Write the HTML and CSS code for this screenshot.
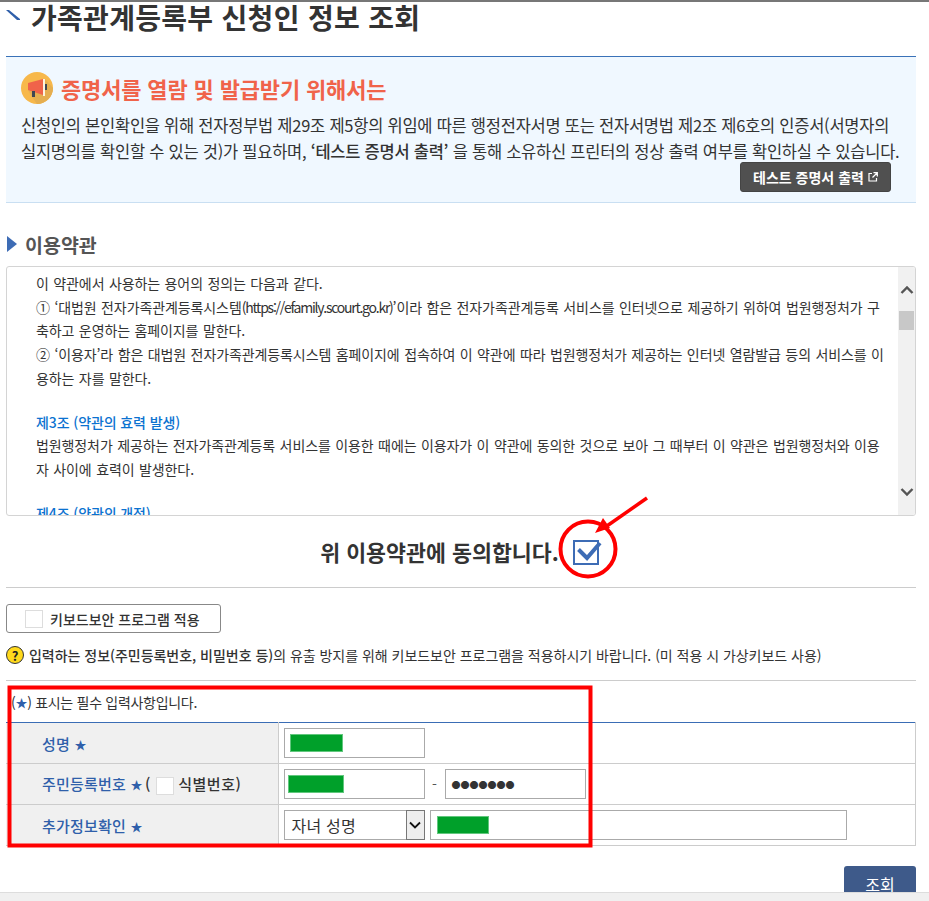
FILE: index.html
```html
<!DOCTYPE html>
<html lang="ko">
<head>
<meta charset="utf-8">
<title>가족관계등록부 신청인 정보 조회</title>
<link rel="stylesheet" href="styles.css">
</head>
<body>
<div class="page">
  <h1 class="title"><svg class="title-mark" viewBox="0 0 14 10"><path d="M0 0 L3 0 L14 9 L14 10 L11 10 Z" fill="#2f5faa"/></svg>가족관계등록부 신청인 정보 조회</h1>

  <section class="notice">
    <div class="notice-head">
      <svg class="notice-icon" viewBox="0 0 32 32">
        <circle cx="16" cy="16" r="16" fill="#f7b84b"/>
        <path d="M11 25 L7 18 L24 7 L32 16 A16 16 0 0 1 16 32 Z" fill="#e5ae50"/>
        <path d="M7 11 L22 7 V23 L7 18 Z" fill="#f0634a"/>
        <rect x="22" y="7" width="2" height="17" fill="#fdf3dd"/>
        <rect x="24" y="12" width="2" height="6" fill="#3f4654"/>
        <rect x="11" y="19" width="3" height="6" fill="#3f4654"/>
      </svg>
      <h2 class="notice-title">증명서를 열람 및 발급받기 위해서는</h2>
    </div>
    <p class="notice-text">신청인의 본인확인을 위해 전자정부법 제29조 제5항의 위임에 따른 행정전자서명 또는 전자서명법 제2조 제6호의 인증서(서명자의<br>실지명의를 확인할 수 있는 것)가 필요하며, <strong>‘테스트 증명서 출력’</strong> 을 통해 소유하신 프린터의 정상 출력 여부를 확인하실 수 있습니다.</p>
    <div class="notice-actions">
      <a class="dark-btn">테스트 증명서 출력
        <svg class="ext-icon" viewBox="0 0 10 10"><path d="M4 1.5 H1 V9 H8.5 V6" fill="none" stroke="#fff" stroke-width="1.2"/><path d="M5.5 0.7 H9.3 V4.5 M9 1 L4.5 5.5" fill="none" stroke="#fff" stroke-width="1.3"/></svg>
      </a>
    </div>
  </section>

  <h3 class="section-title"><span class="tri"></span>이용약관</h3>

  <div class="terms">
    <div class="terms-body">
      <p>이 약관에서 사용하는 용어의 정의는 다음과 같다.</p>
      <p>① ‘대법원 전자가족관계등록시스템<span class="url">(https://efamily.scourt.go.kr)</span>’이라 함은 전자가족관계등록 서비스를 인터넷으로 제공하기 위하여 법원행정처가 구축하고 운영하는 홈페이지를 말한다.</p>
      <p>② ‘이용자’라 함은 대법원 전자가족관계등록시스템 홈페이지에 접속하여 이 약관에 따라 법원행정처가 제공하는 인터넷 열람발급 등의 서비스를 이용하는 자를 말한다.</p>
      <h4 class="terms-head">제3조 (약관의 효력 발생)</h4>
      <p>법원행정처가 제공하는 전자가족관계등록 서비스를 이용한 때에는 이용자가 이 약관에 동의한 것으로 보아 그 때부터 이 약관은 법원행정처와 이용자 사이에 효력이 발생한다.</p>
      <h4 class="terms-head">제4조 (약관의 개정)</h4>
    </div>
    <div class="scrollbar">
      <svg class="sb-arrow" viewBox="0 0 14 10"><path d="M1.5 8 L7 2.5 L12.5 8" fill="none" stroke="#555" stroke-width="2.4"/></svg>
      <div class="sb-thumb"></div>
      <svg class="sb-arrow sb-down" viewBox="0 0 14 10"><path d="M1.5 2 L7 7.5 L12.5 2" fill="none" stroke="#555" stroke-width="2.4"/></svg>
    </div>
  </div>

  <div class="agree">
    <span class="agree-text">위 이용약관에 동의합니다.</span>
    <svg class="agree-check" viewBox="0 0 30 26">
      <rect x="2" y="2" width="24" height="23" fill="#fff" stroke="#3d6cb5" stroke-width="2"/>
      <path d="M6.5 10.5 L15 19 L28 4" fill="none" stroke="#3d6cb5" stroke-width="4"/>
    </svg>
  </div>

  <div class="security">
    <label class="outline-btn"><span class="box"></span>키보드보안 프로그램 적용</label>
    <p class="help"><span class="q-icon">?</span><span><strong>입력하는 정보(주민등록번호, 비밀번호 등)</strong>의 유출 방지를 위해 키보드보안 프로그램을 적용하시기 바랍니다. (미 적용 시 가상키보드 사용)</span></p>
  </div>

  <p class="required-note">(<b class="star">★</b>) 표시는 필수 입력사항입니다.</p>

  <table class="form">
    <tr>
      <th><span class="label">성명 <b class="star">★</b></span></th>
      <td><span class="field"><i class="mask mask-a"></i></span></td>
    </tr>
    <tr>
      <th><span class="label">주민등록번호 <b class="star">★</b></span> <span class="id-opt">( <span class="box"></span> 식별번호)</span></th>
      <td><div class="cell-row"><span class="field"><i class="mask mask-b"></i></span><span class="dash">-</span><span class="field dots">●●●●●●●</span></div></td>
    </tr>
    <tr>
      <th><span class="label">추가정보확인 <b class="star">★</b></span></th>
      <td><div class="cell-row tight"><span class="field select">자녀 성명<span class="sel-btn"><svg viewBox="0 0 12 8"><path d="M1 1.5 L6 6.5 L11 1.5" fill="none" stroke="#111" stroke-width="1.8"/></svg></span></span><span class="field wide"><i class="mask mask-c"></i></span></div></td>
    </tr>
  </table>

  <div class="actions"><a class="search-btn">조회</a></div>
</div>

<svg class="annot" viewBox="0 0 929 901" width="929" height="901">
  <rect x="9.5" y="687.5" width="581" height="158" fill="none" stroke="#ff0000" stroke-width="4"/>
  <ellipse cx="588" cy="549" rx="27.5" ry="27.5" fill="none" stroke="#ff0000" stroke-width="4"/>
  <path d="M647 498 L604 528" stroke="#ff0000" stroke-width="3.5" fill="none"/>
  <path d="M595 533 L603 518 L610 528 Z" fill="#ff0000"/>
</svg>
<div class="hscroll"></div>
</body>
</html>
```
FILE: styles.css
```css
* { box-sizing: border-box; }
html, body { margin: 0; padding: 0; height: 901px; overflow: hidden; background: #fff; }
body {
  font-family: "Noto Sans CJK KR", "Noto Sans", sans-serif;
  color: #333;
  font-size: 14px;
}
.page {
  width: 929px;
  height: 901px;
  padding: 0 13px 0 6px;
  border-top: 2px solid #777;
  overflow: hidden;
}
.title {
  display: flex;
  align-items: center;
  height: 30px;
  margin: 0;
  font-size: 28px;
  line-height: 30px;
  font-weight: 700;
  color: #333;
  letter-spacing: 0.3px;
}
.title-mark { width: 14px; height: 10px; margin: -4px 11px 0 0; }
.notice {
  margin-top: 24px;
  height: 147px;
  background: #f0f8ff;
  border-top: 1px solid #3a72b8;
  border-bottom: 1px solid #c9dff2;
  padding: 15px 15px 0 15px;
}
.notice-head { display: flex; align-items: center; gap: 8px; height: 32px; }
.notice-icon { width: 32px; height: 32px; flex: none; }
.notice-title { margin: 0; font-size: 22px; font-weight: 700; color: #f0634a; letter-spacing: -0.15px; }
.notice-text {
  margin: 8px 0 0;
  font-size: 16.5px;
  line-height: 26px;
  color: #333;
  letter-spacing: -0.25px;
  white-space: nowrap;
}
.notice-text strong { font-weight: 500; }
.notice-actions { display: flex; justify-content: flex-end; margin: -2px 10px 0 0; }
.dark-btn {
  display: flex;
  align-items: center;
  justify-content: center;
  gap: 4px;
  width: 151px;
  height: 30px;
  background: #505050;
  border: 1px solid #444;
  border-radius: 3px;
  color: #fff;
  font-size: 14px;
  font-weight: 700;
}
.ext-icon { width: 10px; height: 10px; }
.section-title {
  display: flex;
  align-items: center;
  gap: 8px;
  margin: 29px 0 0;
  height: 24px;
  font-size: 19.5px;
  font-weight: 700;
  color: #555;
}
.tri {
  width: 0; height: 0; margin-left: 1px;
  border-left: 10px solid #3d6cb5;
  border-top: 8px solid transparent;
  border-bottom: 8px solid transparent;
}
.terms {
  display: flex;
  margin-top: 10px;
  height: 250px;
  border: 1px solid #d4d4d4;
  border-radius: 3px;
  overflow: hidden;
}
.terms-body { flex: 1; min-width: 0; padding: 5px 8px 0 29px; font-size: 14px; line-height: 23.7px; letter-spacing: -0.1px; word-spacing: 0.7px; color: #333; overflow: hidden; }
.terms-body p { margin: 0; }
.url { letter-spacing: -1.25px; }
.terms-head { margin: 20px 0 0; font-size: 14px; font-weight: 500; color: #0b72d0; word-spacing: 0; }
.scrollbar { width: 17px; background: #f1f1f1; display: flex; flex-direction: column; align-items: center; padding-top: 18px; }
.sb-arrow { width: 14px; height: 10px; flex: none; }
.sb-thumb { width: 15px; height: 19px; background: #c8c8c8; margin-top: 16px; }
.sb-down { margin-top: auto; margin-bottom: 18px; }
.agree {
  display: flex;
  align-items: center;
  justify-content: center;
  gap: 13px;
  height: 72px;
  border-bottom: 1px solid #ccc;
}
.agree-text { font-size: 21.7px; font-weight: 700; color: #333; letter-spacing: 0; }
.agree-check { width: 30px; height: 26px; }
.security { border-bottom: 1px solid #ccc; height: 93px; padding-top: 16px; }
.outline-btn {
  display: flex;
  align-items: center;
  gap: 7px;
  width: 215px;
  height: 29px;
  padding-left: 18px;
  background: #fff;
  border: 1px solid #888;
  border-radius: 3px;
  font-size: 14px;
  font-weight: 500;
  color: #333;
}
.box { display: inline-block; width: 18px; height: 18px; background: #fff; border: 1px solid #ddd; vertical-align: middle; }
.help { display: flex; align-items: center; gap: 5px; margin: 12px 0 0; font-size: 14px; letter-spacing: -0.03px; white-space: nowrap; height: 20px; }
.help strong { font-weight: 500; }
.q-icon {
  width: 18px; height: 18px; border-radius: 50%;
  background: #ffd91c; border: 1.5px solid #333;
  display: flex; align-items: center; justify-content: center;
  font-size: 13px; font-weight: 700; color: #222; letter-spacing: 0;
}
.required-note { margin: 11px 0 0 5px; height: 20px; font-size: 14px; line-height: 20px; letter-spacing: -0.3px; }
.star { font-weight: 400; font-size: 12px; color: #2f5faa; }
.form {
  width: 910px;
  margin-top: 10px;
  border-collapse: collapse;
  border-top: 1px solid #3a6db5;
  border-right: 1px solid #ccc;
  table-layout: fixed;
}
.form tr { height: 41px; }
.form th, .form td { padding: 0; border-bottom: 1px solid #ccc; vertical-align: middle; }
.form th {
  width: 272px;
  background: #f0f0f0;
  border-right: 1px solid #ccc;
  text-align: left;
  padding-left: 36px;
  font-size: 15px;
  font-weight: 500;
  white-space: nowrap;
  letter-spacing: 0.2px;
}
.form td { padding-left: 5px; }
.label { color: #2f5faa; }
.id-opt { color: #333; letter-spacing: 0.5px; margin-left: -2px; }
.cell-row { display: flex; align-items: center; }
.cell-row.tight { gap: 5px; }
.field {
  display: flex;
  align-items: center;
  width: 141px;
  height: 30px;
  background: #fff;
  border: 1px solid #aaa;
}
.dash { width: 20px; text-align: center; color: #555; }
.dots { font-size: 9px; padding-left: 6px; letter-spacing: 0; color: #333; }
.wide { width: 417px; }
.select { position: relative; padding-left: 7px; font-size: 16px; justify-content: space-between; letter-spacing: 0.2px; }
.sel-btn {
  width: 19px; height: 30px; margin: -1px;
  background: #eee; border: 1px solid #777;
  display: flex; align-items: center; justify-content: center;
}
.sel-btn svg { width: 12px; height: 8px; }
.mask { display: block; height: 18px; background: #00a02a; border: 1px solid #62c77e; }
.mask-a { width: 53px; margin-left: 5px; }
.mask-b { width: 56px; margin-left: 3px; }
.mask-c { width: 52px; margin-left: 6px; }
.actions { display: flex; justify-content: flex-end; margin-top: 20px; }
.search-btn {
  display: flex;
  align-items: flex-start;
  justify-content: center;
  padding-top: 6px;
  width: 72px;
  height: 34px;
  background: #3e5a8a;
  border-radius: 3px;
  color: #fff;
  font-size: 16px;
  text-decoration: underline;
}
.annot { position: absolute; left: 0; top: 0; pointer-events: none; }
.hscroll { position: absolute; left: 0; bottom: 0; width: 929px; height: 9px; background: #f0f0f0; border-top: 1px solid #ddd; }
```
